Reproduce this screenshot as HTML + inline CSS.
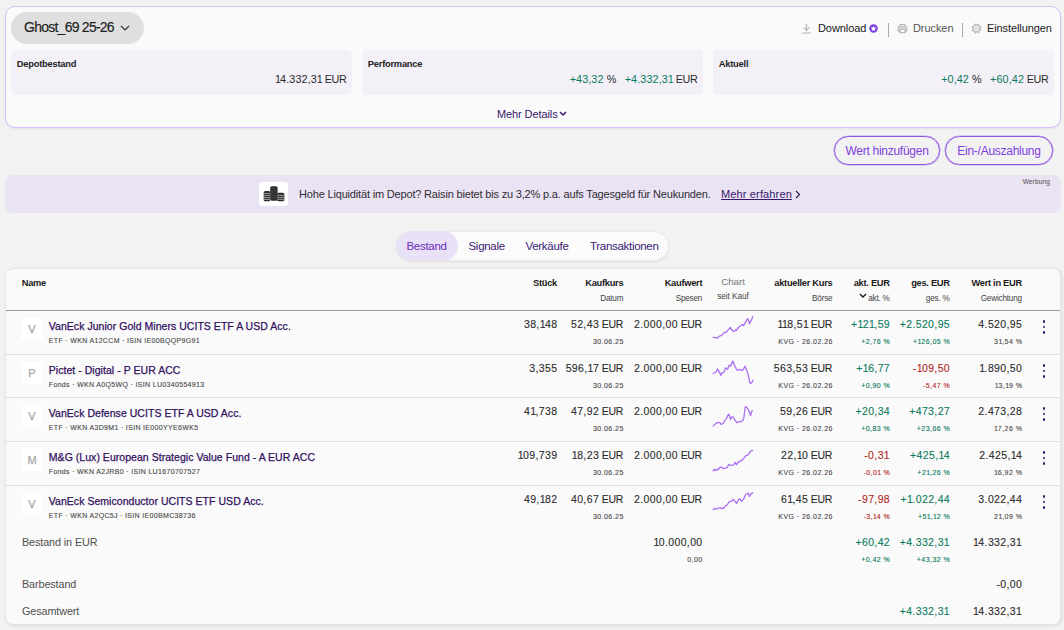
<!DOCTYPE html>
<html lang="de">
<head>
<meta charset="utf-8">
<title>Depot</title>
<style>
*{box-sizing:border-box;margin:0;padding:0}
html,body{width:1064px;height:630px;overflow:hidden}
body{background:#f2f2f2;font-family:"Liberation Sans",sans-serif;color:#1c1c1c;position:relative;font-size:12px}
.abs{position:absolute}
.t{position:absolute;white-space:nowrap;line-height:1}
.r{text-align:right}
/* top card */
#card{left:5px;top:6px;width:1056px;height:122px;background:#fafafa;border:1px solid #d9bffa;border-radius:10px;box-shadow:0 1px 2px rgba(120,80,200,.12)}
#pill{left:11px;top:12px;width:133px;height:32px;border-radius:16px;background:#dfdfdf}
.stat{top:50px;height:45px;width:341px;background:#f3f0f8;border-radius:5px}
.lbl{font-weight:bold;font-size:9.3px;color:#222;letter-spacing:-.22px}
.val{font-size:10.8px;color:#2a2a2a;letter-spacing:.1px}
.val i{font-style:normal;letter-spacing:-.85px}
.val b{font-weight:normal;letter-spacing:-.3px}
.gap{display:inline-block;width:8.3px}
.sep{width:1px;height:14px;background:#a8a8a8;top:23px}
.btn{top:136px;height:29px;border:1px solid #9153e6;box-shadow:0 0 0 .35px #9153e6;border-radius:15px;color:#8040dc;font-size:12px;text-align:center;line-height:28px;letter-spacing:-.27px}
#banner{left:5px;top:175px;width:1056px;height:38px;background:#eae3f3;border-radius:8px}
#tabs{left:396px;top:231px;width:273px;height:30px;border-radius:15px;background:#fbfbfb;border:1px solid #ececec;box-shadow:0 1px 2px rgba(0,0,0,.08)}
#tabact{left:396px;top:231px;width:62px;height:30px;border-radius:15px;background:#e9e1f6}
.tab{font-size:11.5px;color:#3a1b75;top:241px;letter-spacing:-.3px}
#table{left:5px;top:268px;width:1056px;height:357px;background:#fafafa;border:1px solid #e6e6e6;border-radius:8px;box-shadow:1px 1px 3px rgba(0,0,0,.10)}
.hl{left:6px;width:1054px;height:1px;background:#dedede}
.h1{font-weight:bold;font-size:9.3px;color:#1a1a1a;letter-spacing:-.28px}
.h2{font-size:8.2px;color:#444;letter-spacing:-.2px}
.hc{font-size:9.8px;color:#777;letter-spacing:-.05px}
.h2c{font-size:8.2px;color:#444;letter-spacing:-.05px}
.nm{font-size:10.5px;color:#32105f;letter-spacing:.04px;-webkit-text-stroke:.25px #32105f}
.sub{font-size:7px;color:#4a4a4a;letter-spacing:.33px;-webkit-text-stroke:.12px #4a4a4a}
.av{left:21px;width:22px;height:22px;border-radius:3px;background:#fff;color:#a6a6a6;-webkit-text-stroke:.25px #a6a6a6;font-size:11px;text-align:center;line-height:22px}
.n{font-size:10.5px;color:#2a2a2a;letter-spacing:.38px;-webkit-text-stroke:.1px}
.n i{font-style:normal;letter-spacing:-.57px}
.n b{font-weight:normal;letter-spacing:-.3px}
.s{font-size:7px;color:#4a4a4a;letter-spacing:.45px;-webkit-text-stroke:.12px}
.s i{font-style:normal;letter-spacing:-.15px}
.f{font-size:10.8px;color:#505050;letter-spacing:-.1px}
.g{color:#0a7a5c}
.red{color:#b3261e}
.dots{left:1042.9px;width:2.6px;height:2.6px;border-radius:50%;background:#3a1a6e}
</style>
</head>
<body>
<div id="card" class="abs"></div>
<div id="pill" class="abs"></div>
<div class="t" style="left:24px;top:20px;font-size:14px;letter-spacing:-.75px;color:#1d1d1d;-webkit-text-stroke:.15px #1d1d1d">Ghost_69 25-26</div>
<svg class="abs" style="left:120px;top:25px" width="10" height="6" viewBox="0 0 10 6"><path d="M1 1l4 4 4-4" fill="none" stroke="#333" stroke-width="1.2"/></svg>

<div class="abs stat" style="left:11px"></div>
<div class="abs stat" style="left:362px"></div>
<div class="abs stat" style="left:713px"></div>
<div class="t lbl" style="left:16.8px;top:59.7px">Depotbestand</div>
<div class="t lbl" style="left:367.8px;top:59.7px">Performance</div>
<div class="t lbl" style="left:718.8px;top:59.7px">Aktuell</div>
<div class="t val r" style="right:717.4px;top:73.9px"><i>1</i>4.332,3<i>1</i><b> EUR</b></div>
<div class="t val r" style="right:366.4px;top:73.9px"><span class="g">+43,32</span> %<span class="gap"></span><span class="g">+4.332,3<i>1</i></span><b> EUR</b></div>
<div class="t val r" style="right:15.4px;top:73.9px"><span class="g">+0,42</span> %<span class="gap"></span><span class="g">+60,42</span><b> EUR</b></div>
<div class="t" style="left:497px;top:109px;font-size:11px;color:#35186d;letter-spacing:-.1px">Mehr Details</div>
<svg class="abs" style="left:558.5px;top:111px" width="8" height="6" viewBox="0 0 8 6"><path d="M1 1l3 3 3-3" fill="none" stroke="#35186d" stroke-width="1.5"/></svg>

<!-- toolbar -->
<svg class="abs" style="left:801px;top:23px" width="11" height="11" viewBox="0 0 11 11"><path d="M5.5 1v6.2M2.6 4.4l2.9 2.9 2.9-2.9M1 10h9" fill="none" stroke="#b4b4b4" stroke-width="1.2"/></svg>
<div class="t" style="left:818px;top:23px;font-size:11px;color:#1a1a1a;letter-spacing:-.07px">Download</div>
<svg class="abs" style="left:868.5px;top:23.5px" width="9" height="9" viewBox="0 0 10 10"><circle cx="5" cy="5" r="4.7" fill="#7b3fe4"/><path d="M5 2.1l.9 1.9 2.1.3-1.5 1.4.4 2.1L5 6.8 3.1 7.8l.4-2.1L2 4.3l2.1-.3z" fill="#fff"/></svg>
<div class="abs sep" style="left:888px"></div>
<svg class="abs" style="left:897px;top:23px" width="11" height="11" viewBox="0 0 11 11"><path d="M3 3.6V1.6h5v2M3 8H1.3V3.8h8.4V8H8M3 6h5v3.6H3z" fill="none" stroke="#b8b8b8" stroke-width="1.3" stroke-linejoin="round"/></svg>
<div class="t" style="left:913px;top:23px;font-size:11px;color:#555;letter-spacing:-.07px">Drucken</div>
<div class="abs sep" style="left:962px"></div>
<svg class="abs" style="left:970.5px;top:22.5px" width="11" height="11" viewBox="0 0 11 11"><circle cx="5.5" cy="5.5" r="4.1" fill="none" stroke="#bdbdbd" stroke-width="1.9" stroke-dasharray="1.9 1.32"/><circle cx="5.5" cy="5.5" r="3.3" fill="none" stroke="#bdbdbd" stroke-width="1.2"/><circle cx="5.5" cy="5.5" r="1.3" fill="none" stroke="#bdbdbd" stroke-width="1"/></svg>
<div class="t" style="left:987px;top:23px;font-size:11px;color:#1a1a1a;letter-spacing:-.1px">Einstellungen</div>

<div class="abs btn" style="left:834px;width:106px">Wert hinzufügen</div>
<div class="abs btn" style="left:945px;width:108px">Ein-/Auszahlung</div>

<div id="banner" class="abs"></div>
<div class="abs" style="left:259px;top:182px;width:29px;height:24px;background:#fff;border-radius:3px"></div>
<svg class="abs" style="left:259px;top:182px" width="29" height="24" viewBox="0 0 29 24"><g fill="#2b2b2d"><rect x="4.7" y="9" width="6.6" height="10.3" rx="1.6"/><rect x="11.2" y="4.3" width="7.4" height="14.5" rx="1.7"/><rect x="18.1" y="10.8" width="7.3" height="8.5" rx="1.6"/></g><g stroke="#fff" stroke-width=".55" fill="none"><path d="M4.7 11.6h6.6M4.7 13.6h6.6M4.7 15.6h6.6M4.7 17.4h6.6M18.1 13.3h7.3M18.1 15.3h7.3M18.1 17.3h7.3"/></g><g stroke="#55555a" stroke-width=".5" fill="none"><path d="M11.4 6.6h7M11.4 8.3h7M11.4 10h7M11.4 11.7h7M11.4 13.4h7M11.4 15.1h7M11.4 16.8h7"/></g></svg>
<div class="t" style="left:299px;top:189px;font-size:11px;color:#2f2d33;letter-spacing:-.175px">Hohe Liquidität im Depot? Raisin bietet bis zu 3,2% p.a. aufs Tagesgeld für Neukunden.</div>
<div class="t" style="left:721px;top:189px;font-size:11px;color:#35186d;letter-spacing:.14px;text-decoration:underline">Mehr erfahren</div>
<svg class="abs" style="left:795px;top:190px" width="6" height="9" viewBox="0 0 6 9"><path d="M1 1l3.5 3.5L1 8" fill="none" stroke="#2b1350" stroke-width="1.1"/></svg>
<div class="t" style="right:14px;top:179.4px;font-size:6.5px;color:#4a4a4a;letter-spacing:.15px">Werbung</div>

<div id="tabs" class="abs"></div>
<div id="tabact" class="abs"></div>
<div class="t tab" style="left:406.5px;color:#6a2dbd">Bestand</div>
<div class="t tab" style="left:468.5px">Signale</div>
<div class="t tab" style="left:525.5px">Verkäufe</div>
<div class="t tab" style="left:590px">Transaktionen</div>

<div id="table" class="abs"></div>
<!--TBL-->
<div class="abs hl" style="top:310px;background:#9c9c9c"></div>
<div class="t h1" style="left:21.8px;top:279.03px">Name</div>
<div class="t h1 r" style="right:507.00px;top:279.03px">Stück</div>
<div class="t h1 r" style="right:440.70px;top:279.03px">Kaufkurs</div>
<div class="t h2 r" style="right:440.70px;top:294.66px">Datum</div>
<div class="t h1 r" style="right:361.80px;top:279.03px">Kaufwert</div>
<div class="t h2 r" style="right:361.80px;top:294.66px">Spesen</div>
<div class="t h1 r" style="right:231.60px;top:279.03px">aktueller Kurs</div>
<div class="t h2 r" style="right:231.60px;top:294.66px">Börse</div>
<div class="t h1 r" style="right:174.30px;top:279.03px">akt. EUR</div>
<div class="t h2 r" style="right:174.30px;top:294.66px">akt. %</div>
<div class="t h1 r" style="right:114.30px;top:279.03px">ges. EUR</div>
<div class="t h2 r" style="right:114.30px;top:294.66px">ges. %</div>
<div class="t h1 r" style="right:42.10px;top:279.03px">Wert in EUR</div>
<div class="t h2 r" style="right:42.10px;top:294.66px">Gewichtung</div>
<div class="t hc" style="left:721.2px;top:277px">Chart</div>
<div class="t h2c" style="left:717.3px;top:292.96px">seit Kauf</div>
<svg class="abs" style="left:859px;top:293px" width="8" height="6" viewBox="0 0 8 6"><path d="M1 1l3 3 3-3" fill="none" stroke="#1a1a1a" stroke-width="1.4"/></svg>
<div class="abs av" style="top:318px">V</div>
<div class="t nm" style="left:48.8px;top:320.91px">VanEck Junior Gold Miners UCITS ETF A USD Acc.</div>
<div class="t sub" style="left:48.8px;top:336.77px">ETF · WKN A12CCM · ISIN IE00BQQP9G91</div>
<div class="t n r" style="right:506.62px;top:318.91px">38,<i>1</i>48</div>
<div class="t n r" style="right:441.00px;top:318.91px">52,43<b> EUR</b></div>
<div class="t n r" style="right:362.10px;top:318.91px">2.000,00<b> EUR</b></div>
<div class="t n r" style="right:231.90px;top:318.91px"><i>1</i><i>1</i>8,5<i>1</i><b> EUR</b></div>
<div class="t n g r" style="right:173.92px;top:318.91px">+<i>1</i>2<i>1</i>,59</div>
<div class="t n g r" style="right:113.92px;top:318.91px">+2.520,95</div>
<div class="t n r" style="right:41.72px;top:318.91px">4.520,95</div>
<div class="t s r" style="right:440.25px;top:338.07px">30.06.25</div>
<div class="t s r" style="right:231.15px;top:338.07px">KVG · 26.02.26</div>
<div class="t s g r" style="right:173.85px;top:338.07px">+2,76 %</div>
<div class="t s g r" style="right:113.85px;top:338.07px">+<i>1</i>26,05 %</div>
<div class="t s r" style="right:41.65px;top:338.07px">3<i>1</i>,54 %</div>
<svg class="abs" style="left:712px;top:315px" width="43" height="27" viewBox="0 0 43 27"><polyline points="1.1,22.4 4.5,22.6 5.6,23.1 6.9,21.3 9.8,20.4 12.2,17.4 14.3,17.4 15.6,15.4 18.5,12.4 19.5,14.9 21.9,16.5 23.7,14.6 24.5,15.4 26.1,12.8 30.3,9.6 31.6,10.6 32.9,8.1 35.6,3.8 36.4,4.6 37.4,8.6 39.8,4.4 40.7,1.5" fill="none" stroke="#a970f2" stroke-width="1.3" stroke-linejoin="round" stroke-linecap="round"/></svg>
<div class="abs dots" style="top:320px"></div>
<div class="abs dots" style="top:325.5px"></div>
<div class="abs dots" style="top:331px"></div>
<div class="abs hl" style="top:354px"></div>
<div class="abs av" style="top:362px">P</div>
<div class="t nm" style="left:48.8px;top:364.91px">Pictet - Digital - P EUR ACC</div>
<div class="t sub" style="left:48.8px;top:380.77px">Fonds · WKN A0Q5WQ · ISIN LU0340554913</div>
<div class="t n r" style="right:506.62px;top:362.91px">3,355</div>
<div class="t n r" style="right:441.00px;top:362.91px">596,<i>1</i>7<b> EUR</b></div>
<div class="t n r" style="right:362.10px;top:362.91px">2.000,00<b> EUR</b></div>
<div class="t n r" style="right:231.90px;top:362.91px">563,53<b> EUR</b></div>
<div class="t n g r" style="right:173.92px;top:362.91px">+<i>1</i>6,77</div>
<div class="t n red r" style="right:113.92px;top:362.91px">-<i>1</i>09,50</div>
<div class="t n r" style="right:41.72px;top:362.91px"><i>1</i>.890,50</div>
<div class="t s r" style="right:440.25px;top:382.07px">30.06.25</div>
<div class="t s r" style="right:231.15px;top:382.07px">KVG · 26.02.26</div>
<div class="t s g r" style="right:173.85px;top:382.07px">+0,90 %</div>
<div class="t s red r" style="right:113.85px;top:382.07px">-5,47 %</div>
<div class="t s r" style="right:41.65px;top:382.07px"><i>1</i>3,<i>1</i>9 %</div>
<svg class="abs" style="left:712px;top:359px" width="43" height="27" viewBox="0 0 43 27"><polyline points="1.1,14.5 4.3,12.8 5.5,9.9 9.0,16.4 9.8,13.8 11.9,13.3 13.7,8.8 15.6,10.4 17.2,6.1 18.7,7.1 20.6,2.3 21.4,2.3 21.9,5.4 25.3,11.5 27.7,10.4 29.8,11.5 31.6,9.9 32.8,7.3 34.0,9.6 36.1,14.9 37.7,23.6 38.7,24.6 40.6,22.3 40.7,21.2" fill="none" stroke="#a970f2" stroke-width="1.3" stroke-linejoin="round" stroke-linecap="round"/></svg>
<div class="abs dots" style="top:364px"></div>
<div class="abs dots" style="top:369.5px"></div>
<div class="abs dots" style="top:375px"></div>
<div class="abs hl" style="top:397px"></div>
<div class="abs av" style="top:405px">V</div>
<div class="t nm" style="left:48.8px;top:407.91px">VanEck Defense UCITS ETF A USD Acc.</div>
<div class="t sub" style="left:48.8px;top:423.77px">ETF · WKN A3D9M1 · ISIN IE000YYE6WK5</div>
<div class="t n r" style="right:506.62px;top:405.91px">4<i>1</i>,738</div>
<div class="t n r" style="right:441.00px;top:405.91px">47,92<b> EUR</b></div>
<div class="t n r" style="right:362.10px;top:405.91px">2.000,00<b> EUR</b></div>
<div class="t n r" style="right:231.90px;top:405.91px">59,26<b> EUR</b></div>
<div class="t n g r" style="right:173.92px;top:405.91px">+20,34</div>
<div class="t n g r" style="right:113.92px;top:405.91px">+473,27</div>
<div class="t n r" style="right:41.72px;top:405.91px">2.473,28</div>
<div class="t s r" style="right:440.25px;top:425.07px">30.06.25</div>
<div class="t s r" style="right:231.15px;top:425.07px">KVG · 26.02.26</div>
<div class="t s g r" style="right:173.85px;top:425.07px">+0,83 %</div>
<div class="t s g r" style="right:113.85px;top:425.07px">+23,66 %</div>
<div class="t s r" style="right:41.65px;top:425.07px"><i>1</i>7,26 %</div>
<svg class="abs" style="left:712px;top:402px" width="43" height="27" viewBox="0 0 43 27"><polyline points="1.1,24.1 3.5,21.7 5.6,20.4 7.9,20.6 9.3,22.5 11.4,21.2 12.4,19.1 14.3,16.9 15.6,13.8 16.9,12.3 18.5,17.5 19.5,15.1 21.1,14.9 22.4,17.5 24.8,20.6 27.2,19.6 29.3,19.6 31.1,18.0 31.9,15.4 33.2,5.4 34.3,4.6 36.6,8.0 38.5,13.5 39.8,8.8 40.7,8.8" fill="none" stroke="#a970f2" stroke-width="1.3" stroke-linejoin="round" stroke-linecap="round"/></svg>
<div class="abs dots" style="top:407px"></div>
<div class="abs dots" style="top:412.5px"></div>
<div class="abs dots" style="top:418px"></div>
<div class="abs hl" style="top:441px"></div>
<div class="abs av" style="top:449px">M</div>
<div class="t nm" style="left:48.8px;top:451.91px">M&amp;G (Lux) European Strategic Value Fund - A EUR ACC</div>
<div class="t sub" style="left:48.8px;top:467.77px">Fonds · WKN A2JRB0 · ISIN LU1670707527</div>
<div class="t n r" style="right:506.62px;top:449.91px"><i>1</i>09,739</div>
<div class="t n r" style="right:441.00px;top:449.91px"><i>1</i>8,23<b> EUR</b></div>
<div class="t n r" style="right:362.10px;top:449.91px">2.000,00<b> EUR</b></div>
<div class="t n r" style="right:231.90px;top:449.91px">22,<i>1</i>0<b> EUR</b></div>
<div class="t n red r" style="right:174.87px;top:449.91px">-0,3<i>1</i></div>
<div class="t n g r" style="right:113.92px;top:449.91px">+425,<i>1</i>4</div>
<div class="t n r" style="right:41.72px;top:449.91px">2.425,<i>1</i>4</div>
<div class="t s r" style="right:440.25px;top:469.07px">30.06.25</div>
<div class="t s r" style="right:231.15px;top:469.07px">KVG · 26.02.26</div>
<div class="t s red r" style="right:173.85px;top:469.07px">-0,0<i>1</i> %</div>
<div class="t s g r" style="right:113.85px;top:469.07px">+2<i>1</i>,26 %</div>
<div class="t s r" style="right:41.65px;top:469.07px"><i>1</i>6,92 %</div>
<svg class="abs" style="left:712px;top:446px" width="43" height="27" viewBox="0 0 43 27"><polyline points="1.1,24.8 2.2,23.3 3.5,24.6 4.5,23.3 6.4,23.5 7.9,21.4 9.3,21.1 11.4,22.7 15.1,21.7 16.6,18.5 18.5,19.3 21.9,18.8 23.2,16.4 24.5,18.8 26.1,16.2 29.8,14.3 31.9,12.2 33.5,9.8 35.6,9.1 37.7,6.7 38.7,4.8 40.7,4.6" fill="none" stroke="#a970f2" stroke-width="1.3" stroke-linejoin="round" stroke-linecap="round"/></svg>
<div class="abs dots" style="top:451px"></div>
<div class="abs dots" style="top:456.5px"></div>
<div class="abs dots" style="top:462px"></div>
<div class="abs hl" style="top:485px"></div>
<div class="abs av" style="top:493px">V</div>
<div class="t nm" style="left:48.8px;top:495.91px">VanEck Semiconductor UCITS ETF USD Acc.</div>
<div class="t sub" style="left:48.8px;top:511.77px">ETF · WKN A2QC5J · ISIN IE00BMC38736</div>
<div class="t n r" style="right:506.62px;top:493.91px">49,<i>1</i>82</div>
<div class="t n r" style="right:441.00px;top:493.91px">40,67<b> EUR</b></div>
<div class="t n r" style="right:362.10px;top:493.91px">2.000,00<b> EUR</b></div>
<div class="t n r" style="right:231.90px;top:493.91px">6<i>1</i>,45<b> EUR</b></div>
<div class="t n red r" style="right:173.92px;top:493.91px">-97,98</div>
<div class="t n g r" style="right:113.92px;top:493.91px">+<i>1</i>.022,44</div>
<div class="t n r" style="right:41.72px;top:493.91px">3.022,44</div>
<div class="t s r" style="right:440.25px;top:513.07px">30.06.25</div>
<div class="t s r" style="right:231.15px;top:513.07px">KVG · 26.02.26</div>
<div class="t s red r" style="right:173.85px;top:513.07px">-3,<i>1</i>4 %</div>
<div class="t s g r" style="right:113.85px;top:513.07px">+5<i>1</i>,<i>1</i>2 %</div>
<div class="t s r" style="right:41.65px;top:513.07px">2<i>1</i>,09 %</div>
<svg class="abs" style="left:712px;top:490px" width="43" height="27" viewBox="0 0 43 27"><polyline points="1.1,19.6 2.9,18.3 4.5,19.1 7.9,17.5 9.5,18.8 10.6,18.0 11.6,18.5 13.5,15.9 15.6,14.3 17.2,11.7 19.5,11.3 21.1,9.3 22.9,11.2 24.5,13.5 26.6,9.6 27.9,8.8 29.3,11.2 31.6,9.3 33.5,4.8 36.1,3.0 37.4,6.4 39.3,3.3 40.7,3.0" fill="none" stroke="#a970f2" stroke-width="1.3" stroke-linejoin="round" stroke-linecap="round"/></svg>
<div class="abs dots" style="top:495px"></div>
<div class="abs dots" style="top:500.5px"></div>
<div class="abs dots" style="top:506px"></div>
<div class="t f" style="left:22px;top:536.86px">Bestand in EUR</div>
<div class="t n r" style="right:361.42px;top:537.11px"><i>1</i>0.000,00</div>
<div class="t s r" style="right:361.35px;top:555.57px">0,00</div>
<div class="t n g r" style="right:173.92px;top:537.11px">+60,42</div>
<div class="t n g r" style="right:114.87px;top:537.11px">+4.332,3<i>1</i></div>
<div class="t n r" style="right:42.67px;top:537.11px"><i>1</i>4.332,3<i>1</i></div>
<div class="t s g r" style="right:173.85px;top:555.57px">+0,42 %</div>
<div class="t s g r" style="right:113.85px;top:555.57px">+43,32 %</div>
<div class="t f" style="left:22px;top:578.86px">Barbestand</div>
<div class="t n r" style="right:41.72px;top:579.11px">-0,00</div>
<div class="t f" style="left:22px;top:605.86px">Gesamtwert</div>
<div class="t n g r" style="right:114.87px;top:606.11px">+4.332,3<i>1</i></div>
<div class="t n r" style="right:42.67px;top:606.11px"><i>1</i>4.332,3<i>1</i></div>
<!--/TBL-->
</body>
</html>
